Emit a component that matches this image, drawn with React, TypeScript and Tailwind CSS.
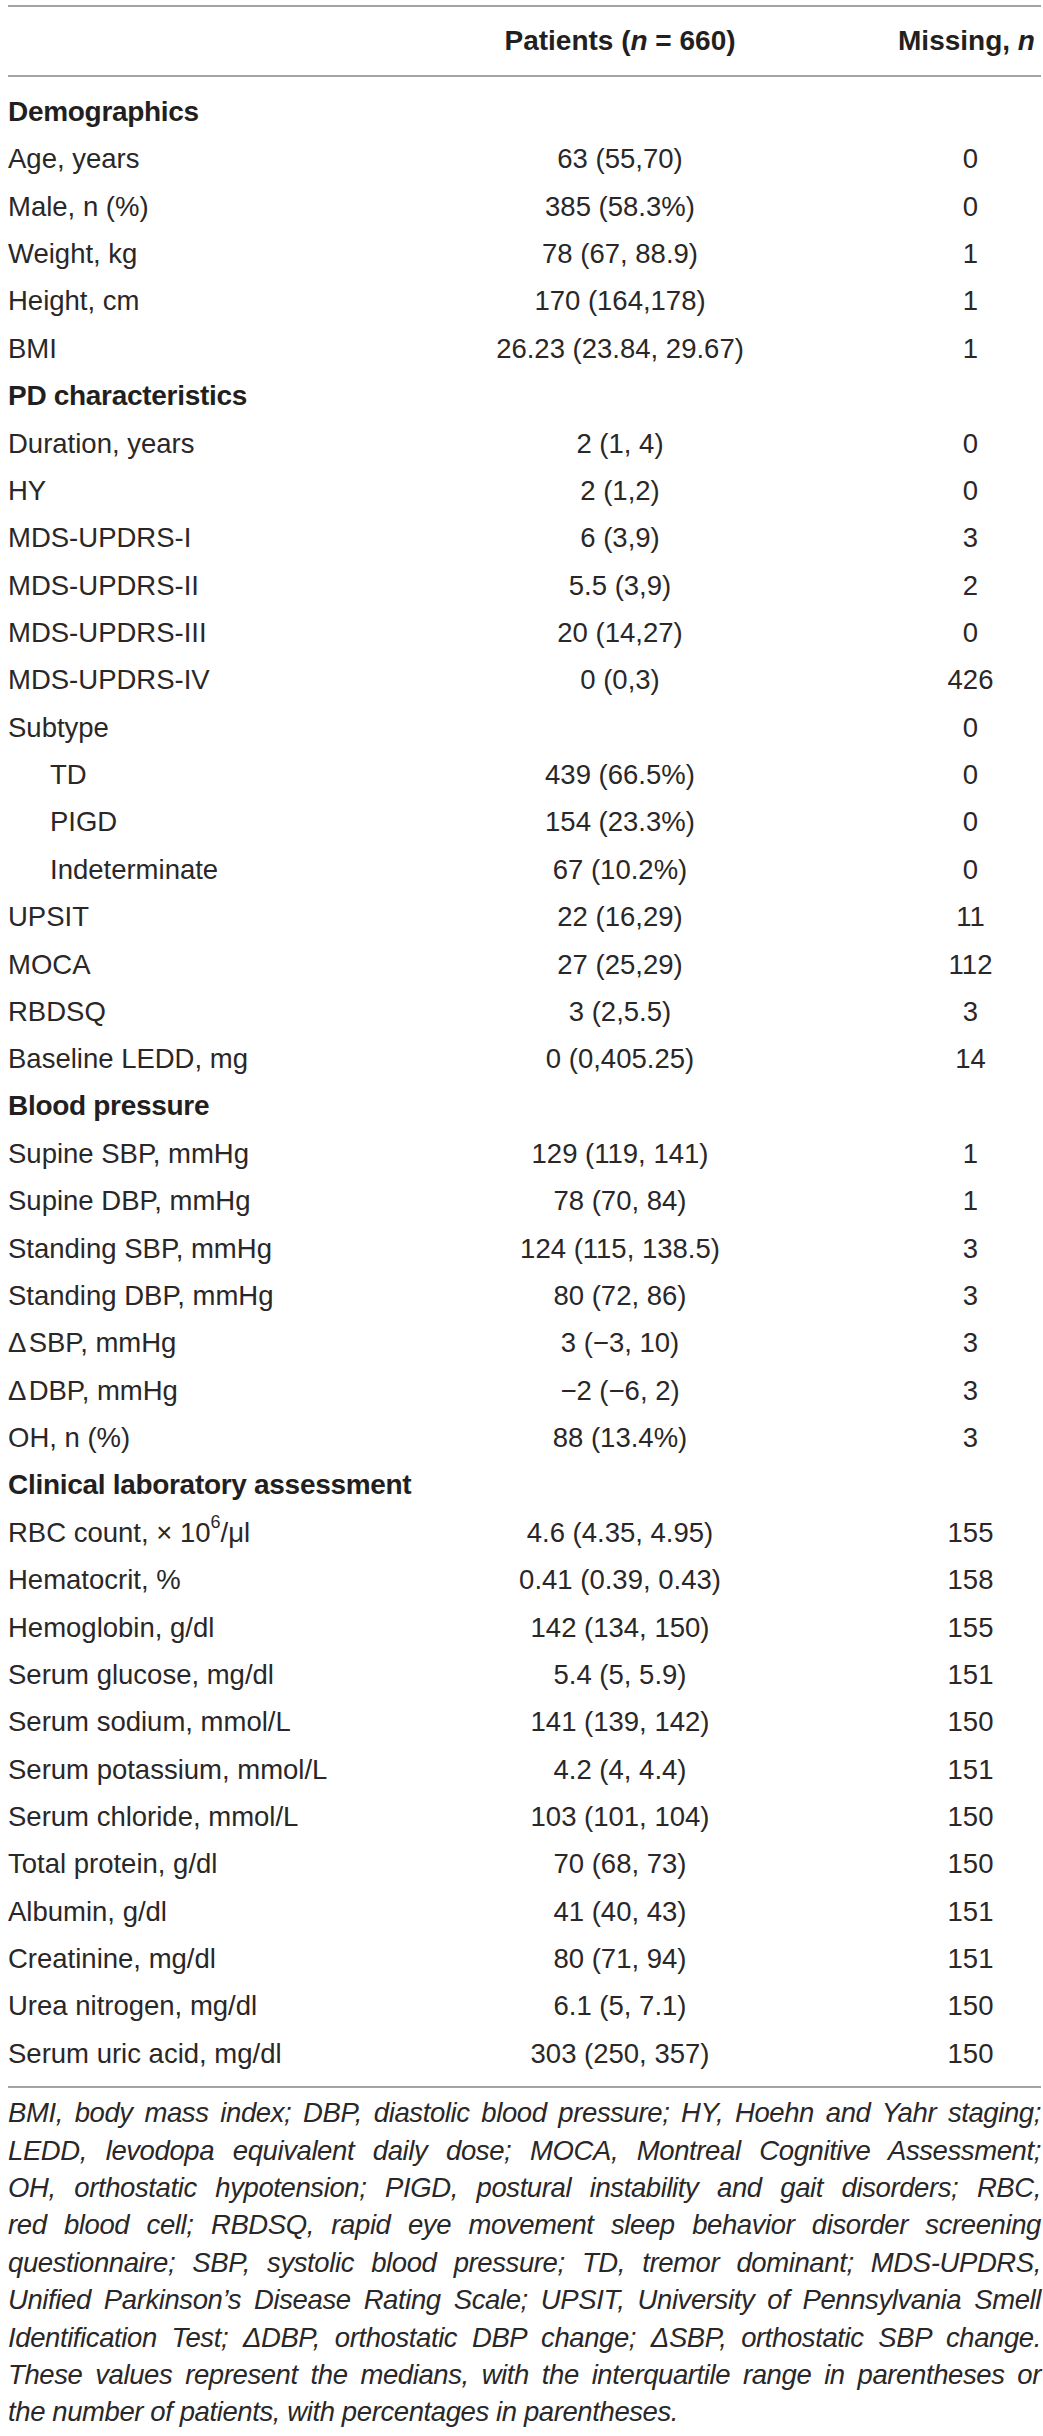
type Row =
  | { kind: "section"; label: string }
  | { kind: "item"; label: React.ReactNode; value: string; missing: string; indent?: boolean };

const rows: Row[] = [
  { kind: "section", label: "Demographics" },
  { kind: "item", label: "Age, years", value: "63 (55,70)", missing: "0" },
  { kind: "item", label: "Male, n (%)", value: "385 (58.3%)", missing: "0" },
  { kind: "item", label: "Weight, kg", value: "78 (67, 88.9)", missing: "1" },
  { kind: "item", label: "Height, cm", value: "170 (164,178)", missing: "1" },
  { kind: "item", label: "BMI", value: "26.23 (23.84, 29.67)", missing: "1" },
  { kind: "section", label: "PD characteristics" },
  { kind: "item", label: "Duration, years", value: "2 (1, 4)", missing: "0" },
  { kind: "item", label: "HY", value: "2 (1,2)", missing: "0" },
  { kind: "item", label: "MDS-UPDRS-I", value: "6 (3,9)", missing: "3" },
  { kind: "item", label: "MDS-UPDRS-II", value: "5.5 (3,9)", missing: "2" },
  { kind: "item", label: "MDS-UPDRS-III", value: "20 (14,27)", missing: "0" },
  { kind: "item", label: "MDS-UPDRS-IV", value: "0 (0,3)", missing: "426" },
  { kind: "item", label: "Subtype", value: "", missing: "0" },
  { kind: "item", label: "TD", value: "439 (66.5%)", missing: "0", indent: true },
  { kind: "item", label: "PIGD", value: "154 (23.3%)", missing: "0", indent: true },
  { kind: "item", label: "Indeterminate", value: "67 (10.2%)", missing: "0", indent: true },
  { kind: "item", label: "UPSIT", value: "22 (16,29)", missing: "11" },
  { kind: "item", label: "MOCA", value: "27 (25,29)", missing: "112" },
  { kind: "item", label: "RBDSQ", value: "3 (2,5.5)", missing: "3" },
  { kind: "item", label: "Baseline LEDD, mg", value: "0 (0,405.25)", missing: "14" },
  { kind: "section", label: "Blood pressure" },
  { kind: "item", label: "Supine SBP, mmHg", value: "129 (119, 141)", missing: "1" },
  { kind: "item", label: "Supine DBP, mmHg", value: "78 (70, 84)", missing: "1" },
  { kind: "item", label: "Standing SBP, mmHg", value: "124 (115, 138.5)", missing: "3" },
  { kind: "item", label: "Standing DBP, mmHg", value: "80 (72, 86)", missing: "3" },
  { kind: "item", label: <>Δ&#8202;SBP, mmHg</>, value: "3 (−3, 10)", missing: "3" },
  { kind: "item", label: <>Δ&#8202;DBP, mmHg</>, value: "−2 (−6, 2)", missing: "3" },
  { kind: "item", label: "OH, n (%)", value: "88 (13.4%)", missing: "3" },
  { kind: "section", label: "Clinical laboratory assessment" },
  {
    kind: "item",
    label: (
      <>
        RBC count, × 10<span className="inline-block text-[18px] align-top -mt-[3px]">6</span>/μl
      </>
    ),
    value: "4.6 (4.35, 4.95)",
    missing: "155",
  },
  { kind: "item", label: "Hematocrit, %", value: "0.41 (0.39, 0.43)", missing: "158" },
  { kind: "item", label: "Hemoglobin, g/dl", value: "142 (134, 150)", missing: "155" },
  { kind: "item", label: "Serum glucose, mg/dl", value: "5.4 (5, 5.9)", missing: "151" },
  { kind: "item", label: "Serum sodium, mmol/L", value: "141 (139, 142)", missing: "150" },
  { kind: "item", label: "Serum potassium, mmol/L", value: "4.2 (4, 4.4)", missing: "151" },
  { kind: "item", label: "Serum chloride, mmol/L", value: "103 (101, 104)", missing: "150" },
  { kind: "item", label: "Total protein, g/dl", value: "70 (68, 73)", missing: "150" },
  { kind: "item", label: "Albumin, g/dl", value: "41 (40, 43)", missing: "151" },
  { kind: "item", label: "Creatinine, mg/dl", value: "80 (71, 94)", missing: "151" },
  { kind: "item", label: "Urea nitrogen, mg/dl", value: "6.1 (5, 7.1)", missing: "150" },
  { kind: "item", label: "Serum uric acid, mg/dl", value: "303 (250, 357)", missing: "150" },
];

const footnote = [
  "BMI, body mass index; DBP, diastolic blood pressure; HY, Hoehn and Yahr staging;",
  "LEDD, levodopa equivalent daily dose; MOCA, Montreal Cognitive Assessment;",
  "OH, orthostatic hypotension; PIGD, postural instability and gait disorders; RBC,",
  "red blood cell; RBDSQ, rapid eye movement sleep behavior disorder screening",
  "questionnaire; SBP, systolic blood pressure; TD, tremor dominant; MDS-UPDRS,",
  "Unified Parkinson’s Disease Rating Scale; UPSIT, University of Pennsylvania Smell",
  "Identification Test; ΔDBP, orthostatic DBP change; ΔSBP, orthostatic SBP change.",
  "These values represent the medians, with the interquartile range in parentheses or",
];

export default function App() {
  return (
    <div className="bg-white w-[1043px] min-h-[2436px] pl-2 pr-[2px] pt-[5px] text-[#2a2728] font-['Liberation_Sans',Arial,sans-serif]">
      {/* header */}
      <div className="border-t-2 border-b-2 border-[#a3a3a3] h-[72px] grid grid-cols-[462px_300px_1fr] items-center text-[28px] font-bold text-[#231f20]">
        <div />
        <div className="text-center">
          Patients (<span className="italic">n</span> = 660)
        </div>
        <div className="pl-[122px] text-center whitespace-nowrap">
          Missing, <span className="italic">n</span>
        </div>
      </div>

      {/* body */}
      <div className="pt-[11px] pb-[9px] border-b-2 border-[#a3a3a3]">
        {rows.map((r, i) =>
          r.kind === "section" ? (
            <div key={i} className="h-[47.37px] flex items-center text-[28px] font-bold tracking-[-0.3px] text-[#231f20]">
              {r.label}
            </div>
          ) : (
            <div key={i} className="h-[47.37px] grid grid-cols-[462px_300px_1fr] items-center text-[27.5px]">
              <div className={r.indent ? "pl-[42px]" : ""}>{r.label}</div>
              <div className="text-center">{r.value}</div>
              <div className="pl-[130px] text-center">{r.missing}</div>
            </div>
          )
        )}
      </div>

      {/* footnote */}
      <div className="pt-[6px] italic text-[27.5px] leading-[37.4px] tracking-[-0.4px]">
        {footnote.map((line, i) => (
          <div key={i} className="text-justify [text-align-last:justify] whitespace-nowrap">
            {line}
          </div>
        ))}
        <div>the number of patients, with percentages in parentheses.</div>
      </div>
    </div>
  );
}
